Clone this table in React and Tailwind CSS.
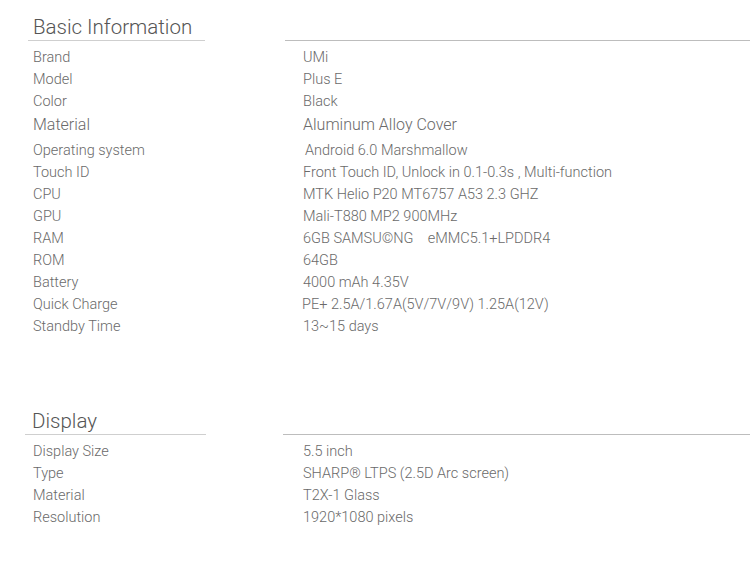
import React from "react";

const basic = [
  ["Brand", "UMi"],
  ["Model", "Plus E"],
  ["Color", "Black"],
  ["Material", "Aluminum Alloy Cover", "big"],
  ["Operating system", "Android 6.0 Marshmallow", "os"],
  ["Touch ID", "Front Touch ID, Unlock in 0.1-0.3s , Multi-function"],
  ["CPU", "MTK Helio P20 MT6757 A53 2.3 GHZ"],
  ["GPU", "Mali-T880 MP2 900MHz"],
  ["RAM", "6GB SAMSU\u00A9NG\u00A0\u00A0\u00A0 eMMC5.1+LPDDR4"],
  ["ROM", "64GB"],
  ["Battery", "4000 mAh 4.35V"],
  ["Quick Charge", "PE+ 2.5A/1.67A(5V/7V/9V) 1.25A(12V)", "qc"],
  ["Standby Time", "13~15 days"],
];

const display = [
  ["Display Size", "5.5 inch"],
  ["Type", "SHARP\u00AE LTPS (2.5D Arc screen)"],
  ["Material", "T2X-1 Glass"],
  ["Resolution", "1920*1080 pixels"],
];

function Header({ title, display }) {
  return (
    <div className="flex items-end h-[41px]">
      <div
        className={
          display
            ? "ml-[25px] w-[181px] border-b border-[#cfcfcf] pl-[7px] text-[20.5px] leading-[26px] text-[#555]"
            : "ml-[28px] w-[177px] border-b border-[#cfcfcf] pl-[5px] text-[20.5px] leading-[26px] text-[#555]"
        }
      >
        {title}
      </div>
      <div
        className={
          display
            ? "ml-[77px] flex-1 border-b border-[#bdbdbd]"
            : "ml-[80px] flex-1 border-b border-[#bdbdbd]"
        }
      />
    </div>
  );
}

function Row({ label, value, kind }) {
  const big = kind === "big";
  return (
    <div
      className={
        big
          ? "grid grid-cols-[270px_1fr] pl-[33px] h-[22px] items-center text-[16px] mb-[5px]"
          : "grid grid-cols-[270px_1fr] pl-[33px] h-[22px] items-center text-[14.5px]"
      }
    >
      <div className="whitespace-nowrap">{label}</div>
      <div
        className={
          kind === "os"
            ? "whitespace-nowrap pl-[2px]"
            : kind === "qc"
            ? "whitespace-nowrap -ml-[1px]"
            : "whitespace-nowrap"
        }
      >
        {value}
      </div>
    </div>
  );
}

export default function App() {
  return (
    <div
      className="w-[750px] h-[575px] bg-white text-[#6a6a6a] font-light overflow-hidden"
      style={{ fontFamily: "Roboto, 'Liberation Sans', sans-serif" }}
    >
      <Header title="Basic Information" />
      <div className="pt-[6px]">
        {basic.map(([l, v, k]) => (
          <Row key={l} label={l} value={v} kind={k} />
        ))}
      </div>
      <div className="h-[56px]" />
      <Header title="Display" display />
      <div className="pt-[6px]">
        {display.map(([l, v]) => (
          <Row key={l} label={l} value={v} />
        ))}
      </div>
    </div>
  );
}
